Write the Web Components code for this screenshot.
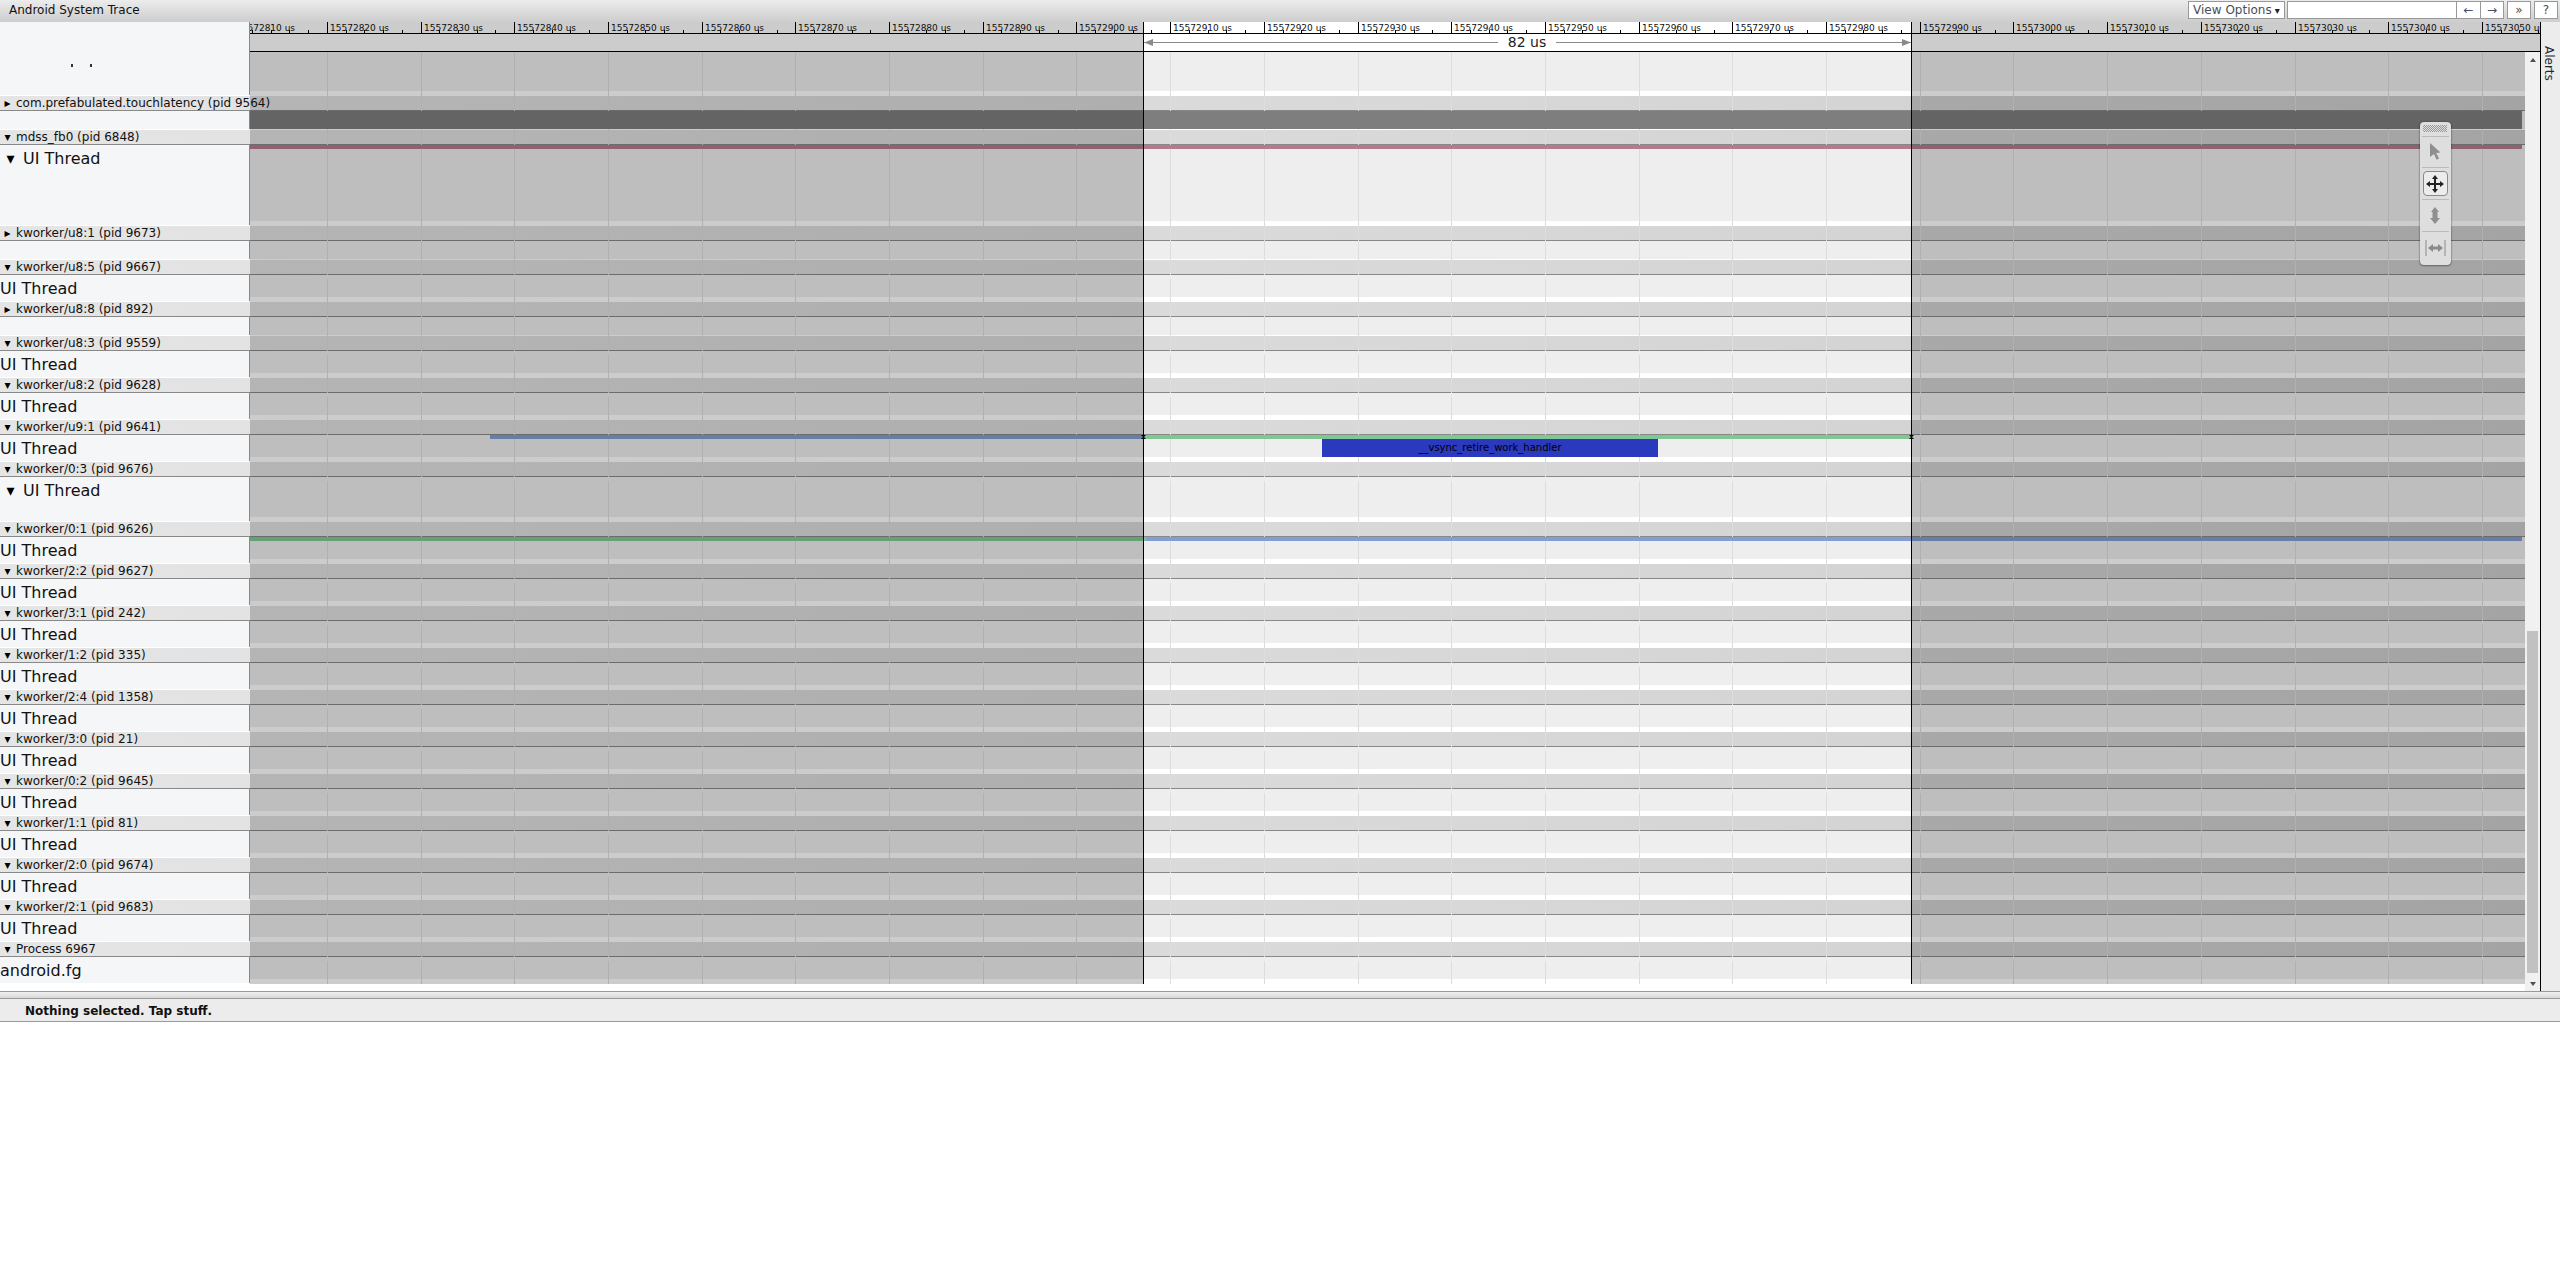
<!DOCTYPE html>
<html>
<head>
<meta charset="utf-8">
<title>Android System Trace</title>
<style>
  html, body { margin: 0; padding: 0; background: #fff; }
  body { font-family: "DejaVu Sans", sans-serif; font-size: 12px; color: #000; overflow: hidden; }
</style>
</head>
<body>

<trace-header></trace-header>

<trace-viewer>
  <time-ruler slot="ruler"></time-ruler>
  <track-list>
    <thread-row lane="39" band="5" gap="0" pad="0"><span slot="label" style="display:block;padding-left:71px;height:3px;position:relative"><i style="display:inline-block;width:2px;height:3px;background:#333;margin-right:17px"></i><i style="display:inline-block;width:2px;height:3px;background:#333"></i></span></thread-row>
    <process-header collapsed>com.prefabulated.touchlatency (pid 9564)</process-header>
    <thread-row lane="18" band="1" gap="0">
      <trace-slice x0="250" x1="2522" top="0" h="18" color="#7e7e7e"></trace-slice>
    </thread-row>
    <process-header>mdss_fb0 (pid 6848)</process-header>
    <thread-row lane="76" band="5" label="UI Thread" arrow>
      <trace-slice x0="250" x1="2522" top="0" h="4" color="#b57a8d"></trace-slice>
    </thread-row>
    <process-header collapsed>kworker/u8:1 (pid 9673)</process-header>
    <thread-row lane="18" band="1" gap="0"></thread-row>
    <process-header>kworker/u8:5 (pid 9667)</process-header>
    <thread-row label="UI Thread"></thread-row>
    <process-header collapsed>kworker/u8:8 (pid 892)</process-header>
    <thread-row lane="18" band="1" gap="0"></thread-row>
    <process-header>kworker/u8:3 (pid 9559)</process-header>
    <thread-row label="UI Thread"></thread-row>
    <process-header>kworker/u8:2 (pid 9628)</process-header>
    <thread-row label="UI Thread"></thread-row>
    <process-header>kworker/u9:1 (pid 9641)</process-header>
    <thread-row label="UI Thread">
      <trace-slice x0="490" x1="1143" top="0" h="4" color="#819fd3"></trace-slice>
      <trace-slice x0="1143" x1="1911" top="0" h="4" color="#80c893"></trace-slice>
      <trace-slice x0="1322" x1="1658" top="4" h="18" color="#2b39bf">__vsync_retire_work_handler</trace-slice>
      <trace-slice x0="1141" x1="1146" top="0" h="4" color="#000" marker></trace-slice>
      <trace-slice x0="1909" x1="1914" top="0" h="4" color="#000" marker></trace-slice>
    </thread-row>
    <process-header>kworker/0:3 (pid 9676)</process-header>
    <thread-row lane="40" band="5" label="UI Thread" arrow></thread-row>
    <process-header>kworker/0:1 (pid 9626)</process-header>
    <thread-row label="UI Thread">
      <trace-slice x0="250" x1="1146" top="0" h="4" color="#80c893"></trace-slice>
      <trace-slice x0="1146" x1="2522" top="0" h="4" color="#819fd3"></trace-slice>
    </thread-row>
    <process-header>kworker/2:2 (pid 9627)</process-header>
    <thread-row label="UI Thread"></thread-row>
    <process-header>kworker/3:1 (pid 242)</process-header>
    <thread-row label="UI Thread"></thread-row>
    <process-header>kworker/1:2 (pid 335)</process-header>
    <thread-row label="UI Thread"></thread-row>
    <process-header>kworker/2:4 (pid 1358)</process-header>
    <thread-row label="UI Thread"></thread-row>
    <process-header>kworker/3:0 (pid 21)</process-header>
    <thread-row label="UI Thread"></thread-row>
    <process-header>kworker/0:2 (pid 9645)</process-header>
    <thread-row label="UI Thread"></thread-row>
    <process-header>kworker/1:1 (pid 81)</process-header>
    <thread-row label="UI Thread"></thread-row>
    <process-header>kworker/2:0 (pid 9674)</process-header>
    <thread-row label="UI Thread"></thread-row>
    <process-header>kworker/2:1 (pid 9683)</process-header>
    <thread-row label="UI Thread"></thread-row>
    <process-header>Process 6967</process-header>
    <thread-row label="android.fg"></thread-row>
  </track-list>
  <track-scrollbar slot="scrollbar"></track-scrollbar>
  <alerts-tab slot="alerts">Alerts</alerts-tab>
  <tool-panel slot="tools"></tool-panel>
</trace-viewer>

<drag-handle></drag-handle>
<status-bar>Nothing selected. Tap stuff.</status-bar>

<script>
// time axis, all in page pixels
const TICK_ORIGIN = 327.3;
const TICK_STEP = 93.7;
const SEL_START = 1143;
const SEL_END = 1911;
const LABEL_W = 250;

// the grid is one opaque 1px line per major tick, shared through a custom property
const gridLayers = [];
for (let n = 0; n <= 23; n++) {
    const x = Math.floor(TICK_ORIGIN + TICK_STEP * n) - LABEL_W;
    gridLayers.push(`linear-gradient(#ddd, #ddd) ${x}px 0 / 1px 100% no-repeat`);
}
document.documentElement.style.setProperty("--grid", gridLayers.join(", "));

class TraceHeader extends HTMLElement {
    constructor() {
        super();
        this.attachShadow({mode: "open"}).innerHTML = `
            <style>
                :host {
                    display: flex;
                    align-items: center;
                    height: 22px;
                    box-sizing: border-box;
                    padding: 0 2px 3px 9px;
                    background: linear-gradient(#ececec, #cdcdcd);
                    font: 12px "DejaVu Sans", sans-serif;
                }
                .title { flex: 1; color: #111; }
                .btn, input {
                    box-sizing: border-box;
                    height: 18px;
                    background: #fff;
                    border: 1px solid #999;
                    color: #4c4c55;
                    text-align: center;
                    line-height: 16px;
                    margin: 0;
                    padding: 0;
                    outline: none;
                }
                .options { width: 97px; margin-right: 2px; white-space: nowrap; }
                input { width: 169px; border-right: 0; }
                .nav { width: 24px; margin-right: 3px; }
                .nav.joined { margin-right: 0; border-right: 0; }
                .nav.last { margin-right: 0; }
            </style>
            <div class="title">Android System Trace</div>
            <div class="btn options">View Options<span style="font-size:10px;color:#222"> ▾</span></div>
            <input type="text">
            <div class="btn nav joined">←</div>
            <div class="btn nav">→</div>
            <div class="btn nav">»</div>
            <div class="btn nav last">?</div>
        `;
    }
}

class TraceViewer extends HTMLElement {
    constructor() {
        super();
        this.attachShadow({mode: "open"}).innerHTML = `
            <style>
                :host {
                    display: flex;
                    position: relative;
                    height: 969px;
                    overflow: hidden;
                }
                .main { width: 2540px; display: flex; flex-direction: column; }
                .body { flex: 1; display: flex; min-height: 0; }
                .side { flex: 1; display: flex; border-left: 1px solid #000; }
                ::slotted([slot="tools"]) { position: absolute; left: 2420px; top: 100px; }
            </style>
            <div class="main">
                <slot name="ruler"></slot>
                <div class="body">
                    <slot></slot>
                    <slot name="scrollbar"></slot>
                </div>
            </div>
            <div class="side"><slot name="alerts"></slot></div>
            <slot name="tools"></slot>
        `;
    }
}

class TimeRuler extends HTMLElement {
    constructor() {
        super();
        this.shadowDOM = this.attachShadow({mode: "open"});
    }

    connectedCallback() {
        this.render();
    }

    render() {
        const W = 2290;
        let ticks = "";
        for (let n = -1; n <= 23; n++) {
            const x = Math.floor(TICK_ORIGIN + TICK_STEP * n) - LABEL_W + 0.5;
            ticks += `<path d="M${x} 0V11"/>`;
            for (let k = 1; k < 5; k++) {
                const mx = Math.floor(TICK_ORIGIN + TICK_STEP * n + k * TICK_STEP / 5) - LABEL_W + 0.5;
                ticks += `<path d="M${mx} 8V11"/>`;
            }
        }
        let labels = "";
        for (let n = -1; n <= 23; n++) {
            const x = Math.floor(TICK_ORIGIN + TICK_STEP * n) - LABEL_W + 3;
            labels += `<text x="${x}" y="9">${15572820 + n * 10} us</text>`;
        }
        const a = SEL_START - LABEL_W;
        const b = SEL_END - LABEL_W;
        const mid = 1527 - LABEL_W;
        this.shadowDOM.innerHTML = `
            <style>
                :host { display: flex; height: 30px; }
                .spacer { width: 249px; background: #f5f6f8; border-right: 1px solid #888; }
                svg { display: block; width: ${W}px; height: 30px; }
                text { font: 9px "DejaVu Sans", sans-serif; fill: #111; }
                .measure { font-size: 14px; fill: #222; text-anchor: middle; }
            </style>
            <div class="spacer"></div>
            <svg viewBox="0 0 ${W} 30">
                <rect width="${W}" height="30" fill="#fff"/>
                <g stroke="#000" stroke-width="1" fill="none" shape-rendering="crispEdges">${ticks}</g>
                ${labels}
                <path d="M0 11.5H${W}M0 29.5H${W}" stroke="#000" shape-rendering="crispEdges"/>
                <path d="M${a + 1} 20.5H${mid - 29}M${mid + 29} 20.5H${b}" stroke="#8a8a8a" shape-rendering="crispEdges"/>
                <path d="M${a + 1} 20.5l9 -3.5v7z" fill="#8a8a8a"/>
                <path d="M${b} 20.5l-9 -3.5v7z" fill="#8a8a8a"/>
                <text class="measure" x="${mid}" y="25">82 us</text>
                <rect width="${a}" height="30" fill="rgba(0,0,0,0.2)"/>
                <rect x="${b + 1}" width="${W - b - 1}" height="30" fill="rgba(0,0,0,0.2)"/>
                <path d="M${a + 0.5} 0V30M${b + 0.5} 0V30" stroke="#000" shape-rendering="crispEdges"/>
            </svg>
        `;
    }
}

class TrackList extends HTMLElement {
    constructor() {
        super();
        this.attachShadow({mode: "open"}).innerHTML = `
            <style>
                :host { display: block; width: 2525px; background: #fff; overflow: hidden; }
                .rows { position: relative; }
                .dim { position: absolute; top: 0; bottom: 0; background: rgba(0,0,0,0.2); pointer-events: none; }
                .line { position: absolute; top: 0; bottom: 0; width: 1px; background: #000; pointer-events: none; }
            </style>
            <div class="rows">
                <slot></slot>
                <div class="dim" style="left:${LABEL_W}px;width:${SEL_START - LABEL_W}px"></div>
                <div class="dim" style="left:${SEL_END + 1}px;right:0"></div>
                <div class="line" style="left:${SEL_START}px"></div>
                <div class="line" style="left:${SEL_END}px"></div>
            </div>
        `;
    }
}

class ProcessHeader extends HTMLElement {
    constructor() {
        super();
        const arrow = this.hasAttribute("collapsed") ? "▸" : "▾";
        this.attachShadow({mode: "open"}).innerHTML = `
            <style>
                :host {
                    display: block;
                    position: relative;
                    height: 15px;
                    box-sizing: border-box;
                    background: linear-gradient(to right, #e5e5e5, #cecece);
                    border-bottom: 1px solid #888;
                    font: 12px/14px "DejaVu Sans", sans-serif;
                    color: #111;
                    white-space: nowrap;
                }
                .grid { position: absolute; top: 0; left: ${LABEL_W}px; right: 0; bottom: -1px; background: var(--grid); }
                .text { position: relative; z-index: 1; display: flex; }
                .arrow { width: 16px; text-align: center; box-sizing: border-box; padding-right: 1px; color: #000; flex: none; }
            </style>
            <div class="grid"></div>
            <div class="text"><span class="arrow">${arrow}</span><span><slot></slot></span></div>
        `;
    }
}

class ThreadRow extends HTMLElement {
    constructor() {
        super();
        const lane = Number(this.getAttribute("lane") || 22);
        const band = Number(this.getAttribute("band") || 5);
        const gap = Number(this.getAttribute("gap") === null ? 4 : this.getAttribute("gap"));
        const pad = this.getAttribute("pad") === null ? 4 : this.getAttribute("pad");
        const label = this.getAttribute("label") || "";
        const arrow = this.hasAttribute("arrow");
        this.attachShadow({mode: "open"}).innerHTML = `
            <style>
                :host { display: flex; height: ${lane + band}px; font: 16px/19px "DejaVu Sans", sans-serif; }
                .label {
                    box-sizing: border-box;
                    width: 250px;
                    flex: none;
                    margin-bottom: 1px;
                    padding-top: ${pad}px;
                    background: #f5f6f8;
                    border-right: 1px solid #888;
                    color: #111;
                    white-space: nowrap;
                    overflow: hidden;
                }
                .arrow { display: inline-block; width: 23px; text-align: center; padding-right: 2px; box-sizing: border-box; color: #000; }
                .lane { flex: 1; position: relative; background: #fff; }
                .fill { position: absolute; left: 0; right: 0; top: 0; height: ${lane}px; background: #eee; }
                .grid { position: absolute; left: 0; right: 0; top: ${gap}px; bottom: 0; background: var(--grid); }
            </style>
            <div class="label"><slot name="label">${arrow ? '<span class="arrow">▾</span>' : ""}${label}</slot></div>
            <div class="lane">
                <div class="fill"></div>
                <div class="grid"></div>
                <slot></slot>
            </div>
        `;
    }
}

class TraceSlice extends HTMLElement {
    constructor() {
        super();
        const x0 = Number(this.getAttribute("x0")) - LABEL_W;
        const x1 = Number(this.getAttribute("x1")) - LABEL_W;
        const shape = this.hasAttribute("marker") ? "clip-path: polygon(0 0, 100% 0, 60% 50%, 100% 100%, 0 100%, 40% 50%);" : "";
        this.attachShadow({mode: "open"}).innerHTML = `
            <style>
                :host {
                    position: absolute;
                    left: ${x0}px;
                    width: ${x1 - x0}px;
                    top: ${this.getAttribute("top")}px;
                    height: ${this.getAttribute("h")}px;
                    background: ${this.getAttribute("color")};
                    font: 10px/17px "DejaVu Sans", sans-serif;
                    color: #000;
                    text-align: center;
                    overflow: hidden;
                    white-space: nowrap;
                    ${shape}
                }
            </style>
            <slot></slot>
        `;
    }
}

class TrackScrollbar extends HTMLElement {
    constructor() {
        super();
        this.attachShadow({mode: "open"}).innerHTML = `
            <style>
                :host {
                    display: flex;
                    flex-direction: column;
                    align-items: center;
                    width: 15px;
                    background: #f1f1f1;
                }
                .up, .down { width: 0; height: 0; border: 3.5px solid transparent; flex: none; }
                .up { border-bottom: 4px solid #505050; border-top: 0; margin-top: 6px; }
                .down { border-top: 4px solid #505050; border-bottom: 0; margin-bottom: 5px; }
                .space { flex: 1; display: flex; flex-direction: column; width: 11px; }
                .spacer { height: 569px; }
                .thumb { height: 342px; background: #c1c1c1; }
            </style>
            <div class="up"></div>
            <div class="space"><div class="spacer"></div><div class="thumb"></div></div>
            <div class="down"></div>
        `;
    }
}

class AlertsTab extends HTMLElement {
    constructor() {
        super();
        this.attachShadow({mode: "open"}).innerHTML = `
            <style>
                :host {
                    display: block;
                    flex: 1;
                    background: #ececec;
                    box-sizing: border-box;
                    padding: 24px 4px 0 0;
                    writing-mode: vertical-rl;
                    font: 12px/14px "DejaVu Sans", sans-serif;
                    color: #1c2a3a;
                }
            </style>
            <slot></slot>
        `;
    }
}

class ToolPanel extends HTMLElement {
    constructor() {
        super();
        this.attachShadow({mode: "open"}).innerHTML = `
            <style>
                :host {
                    display: flex;
                    flex-direction: column;
                    align-items: center;
                    box-sizing: border-box;
                    width: 31px;
                    height: 143px;
                    padding: 3px 1px 0 0;
                    background: #dedede;
                    border-radius: 4px;
                    box-shadow: 0 0 2px rgba(0,0,0,0.45), 0 1px 2px rgba(0,0,0,0.3);
                }
                .grip {
                    width: 24px;
                    height: 7px;
                    margin-bottom: 4px;
                    background: repeating-conic-gradient(#999 0 25%, transparent 0 50%) 0 0 / 2px 2px;
                }
                .tool {
                    display: flex;
                    align-items: center;
                    justify-content: center;
                    width: 27px;
                    border-top: 1px solid #bbb;
                    box-sizing: border-box;
                }
                .on {
                    width: 25px;
                    height: 25px;
                    display: flex;
                    align-items: center;
                    justify-content: center;
                    border: 1px solid #8a8a8a;
                    border-radius: 4px;
                    background: #ececec;
                    box-sizing: border-box;
                }
                svg { display: block; }
            </style>
            <div class="grip"></div>
            <div class="tool" style="height:31px;padding-bottom:2px">
                <svg width="14" height="18" viewBox="0 0 14 18"><path d="M2 1l10.500 9.500-4.200.6 2.700 5.400-2.400 1.200-2.600-5.600L2 15z" fill="#8f8f8f"/></svg>
            </div>
            <div class="tool" style="height:32px">
                <div class="on">
                    <svg width="18" height="18" viewBox="0 0 18 18"><path d="M9 0l3 4h-2v4h4V6l4 3-4 3v-2h-4v4h2l-3 4-3-4h2v-4H4v2L0 9l4-3v2h4V4H6z" fill="#222"/></svg>
                </div>
            </div>
            <div class="tool" style="height:32px">
                <svg width="14" height="17" viewBox="0 0 14 17"><path d="M7 0l4 5H9.500v6H12l-5 6-5-6h2.500V5H3z" fill="#8f8f8f"/></svg>
            </div>
            <div class="tool" style="height:33px">
                <svg width="21" height="16" viewBox="0 0 21 16"><path d="M1 0v16M20 0v16" stroke="#8a8a8a" fill="none"/><path d="M3 8l5-4v2.500h5V4l5 4-5 4V9.500H8V12z" fill="#8a8a8a"/></svg>
            </div>
        `;
    }
}

class DragHandle extends HTMLElement {
    constructor() {
        super();
        this.attachShadow({mode: "open"}).innerHTML = `
            <style>
                :host {
                    display: block;
                    height: 8px;
                    box-sizing: border-box;
                    border-top: 1px solid #999;
                    border-bottom: 1px solid #999;
                    background: linear-gradient(#f0f0f0, #d8d8d8);
                }
            </style>
        `;
    }
}

class StatusBar extends HTMLElement {
    constructor() {
        super();
        this.attachShadow({mode: "open"}).innerHTML = `
            <style>
                :host {
                    display: block;
                    height: 23px;
                    box-sizing: border-box;
                    padding-left: 25px;
                    background: #ececec;
                    border-bottom: 1px solid #999;
                    font: bold 12px/25px "DejaVu Sans", sans-serif;
                    color: #111;
                }
            </style>
            <slot></slot>
        `;
    }
}

customElements.define("trace-header", TraceHeader);
customElements.define("trace-viewer", TraceViewer);
customElements.define("time-ruler", TimeRuler);
customElements.define("track-list", TrackList);
customElements.define("process-header", ProcessHeader);
customElements.define("thread-row", ThreadRow);
customElements.define("trace-slice", TraceSlice);
customElements.define("track-scrollbar", TrackScrollbar);
customElements.define("alerts-tab", AlertsTab);
customElements.define("tool-panel", ToolPanel);
customElements.define("drag-handle", DragHandle);
customElements.define("status-bar", StatusBar);
</script>
</body>
</html>
